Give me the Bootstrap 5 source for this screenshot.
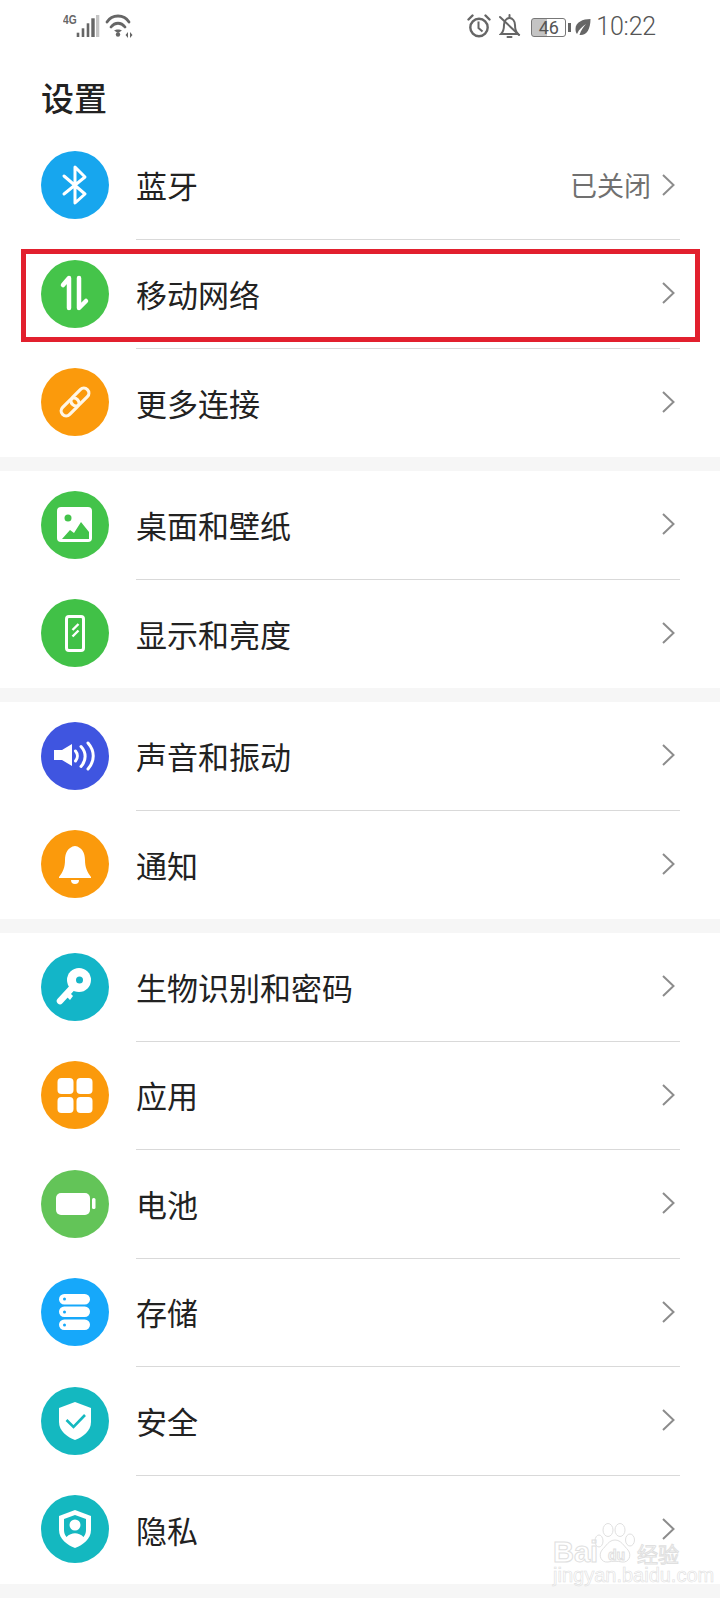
<!DOCTYPE html>
<html lang="zh">
<head>
  <meta charset="UTF-8" />
  <meta name="viewport" content="width=device-width, initial-scale=1.0"/>
  <title>设置</title>
  <link href="https://cdn.jsdelivr.net/npm/bootstrap@5.3.0/dist/css/bootstrap.min.css" rel="stylesheet">
  <style>
    body {
      font-family: "Noto Sans CJK SC", "Liberation Sans", sans-serif;
      background: #fff;
      color: #222;
      width: 720px;
      height: 1600px;
      overflow: hidden;
      position: relative;
    }
    .stat-bar {
      height: 69px;
      padding: 11px 64px 0 63px;
      color: #666;
    }
    .stat-left, .stat-right { height: 32px; }
    .net-label {
      font-family: "Liberation Sans", sans-serif;
      font-size: 12px;
      font-weight: 700;
      line-height: 12px;
      margin-top: 3px;
      transform: scaleX(.85);
      transform-origin: left top;
      width: 13px;
    }
    .batt-box {
      width: 35px;
      height: 19px;
      border: 1px solid #777;
      border-radius: 3px;
      background: linear-gradient(90deg, #c4c4c4 46%, #fff 46%);
      font-family: "Roboto", sans-serif;
      font-size: 18px;
      line-height: 17px;
      text-align: center;
      color: #555;
    }
    .batt-nub { width: 3px; height: 9px; background: #666; margin-left: 2px; }
    .clock {
      font-family: "Roboto", sans-serif;
      font-size: 25px;
      font-weight: 300;
      letter-spacing: -.2px;
      line-height: 32px;
      color: #555;
      margin-left: 5px;
    }
    .page-title {
      font-size: 33px;
      font-weight: 500;
      line-height: 57px;
      height: 62px;
      margin: 0 0 0 41px;
      color: #222;
    }
    .set-group { border-radius: 0; }
    .set-group + .set-group { border-top: 14px solid #f6f6f6; }
    .set-row {
      height: 108.5px;
      padding: 0 40px 0 41px;
      border: 0;
      background: transparent;
      position: relative;
    }
    .set-ico { width: 68px; height: 68px; flex: none; display: block; }
    .set-main {
      height: calc(100% + 1px);
      margin-left: 27px;
      padding-right: 5px;
      font-size: 31px;
      color: #222;
      line-height: 1;
    }
    .set-row:not(:last-child) .set-main { border-bottom: 1px solid #d9d9d9; }
    .set-val { font-size: 27px; color: #707070; margin-right: 11px; }
    .chev { width: 13px; height: 22px; flex: none; position: relative; z-index: 2; }
    .hi-box {
      position: absolute;
      left: 21px;
      right: 20px;
      top: 9.5px;
      bottom: 6px;
      border: 5px solid #e2202e;
      pointer-events: none;
    }
    .wmark {
      position: absolute;
      left: 553px;
      top: 1523px;
      width: 128px;
      height: 60px;
      color: transparent;
      -webkit-text-stroke: 1px #e0e0e0;
    }
    .wm-bai { position: absolute; left: 0; top: 14px; font: 700 29px/30px "Liberation Sans", sans-serif; }
    .wm-du { position: absolute; left: 55px; top: 25px; font: 700 14px/14px "Liberation Sans", sans-serif; }
    .wm-jy { position: absolute; left: 84px; top: 18px; font-size: 21px; line-height: 24px; white-space: nowrap; }
    .wm-url { position: absolute; left: 0; top: 43px; font: 400 20px/18px "Liberation Sans", sans-serif; white-space: nowrap; -webkit-text-stroke: .6px #e0e0e0; }
    .wm-paw { position: absolute; left: 41px; top: 0; width: 42px; height: 42px; }
  </style>
</head>
<body>
  <div class="stat-bar d-flex justify-content-between">
    <div class="stat-left d-flex align-items-start">
      <span class="net-label">4G</span>
      <svg width="24" height="30" viewBox="0 0 24 30" class="d-block">
        <g fill="#666"><rect x=".7" y="21.700" width="2.600" height="4.300"/><rect x="5.700" y="17.300" width="2.600" height="8.700"/><rect x="10.700" y="12.300" width="2.600" height="13.700"/><rect x="15.300" y="7.300" width="3.400" height="18.700"/></g>
        <rect x="20" y="4" width="3.300" height="22" fill="#c4c4c4"/>
      </svg>
      <svg width="30" height="30" viewBox="0 0 30 30" class="d-block ms-1">
        <g fill="none" stroke="#666" stroke-width="2.800" stroke-linecap="round">
          <path d="M3 11C8 3 20 3 25 11"/><path d="M7 16C11 11 17 11 21 16"/>
        </g>
        <path d="M10 19.500C12 18 16 18 18 19.500L14 22z" fill="#666"/>
        <circle cx="14" cy="23.500" r="2.200" fill="#666"/>
        <path d="M24 21v6l-2.500-3zM26 21v6l2.500-3z" fill="#666"/>
      </svg>
    </div>
    <div class="stat-right d-flex align-items-center">
      <svg width="24" height="30" viewBox="0 0 24 30" class="d-block">
        <circle cx="12" cy="15.500" r="8.700" fill="none" stroke="#666" stroke-width="2.400"/>
        <path d="M11.500 9.500v6.500l4 3.500" fill="none" stroke="#666" stroke-width="2"/>
        <path d="M1.500 7.500l4-4M22.500 7.500l-4-4" stroke="#666" stroke-width="2.400" stroke-linecap="round"/>
      </svg>
      <svg width="24" height="30" viewBox="0 0 24 30" class="d-block ms-2">
        <path d="M2 22c2.500-2.500 3-5 3-9 0-4 2.500-7 5.500-7s5.500 3 5.500 7c0 4 1 7 3 9z" fill="none" stroke="#666" stroke-width="2"/>
        <path d="M10.500 3v3M8.500 25h4M1 5l19 18" stroke="#666" stroke-width="2" stroke-linecap="round"/>
      </svg>
      <div class="batt-box ms-2">46</div>
      <div class="batt-nub"></div>
      <svg width="16" height="20" viewBox="0 0 16 20" class="d-block ms-1">
        <path d="M15.500 2C8 2 .5 5 .5 12c0 2 .5 4 1.500 5C4 12 8 9 11 7 8.500 10 6 13 4.500 18 11 19 15.500 13 15.500 2z" fill="#666"/>
      </svg>
      <span class="clock">10:22</span>
    </div>
  </div>

  <h1 class="page-title">设置</h1>

  <div class="list-group list-group-flush set-group">
    <div class="list-group-item set-row d-flex align-items-center">
      <svg class="set-ico" viewBox="0 0 68 68"><circle cx="34" cy="34" r="34" fill="#17a6ee"/><path d="M23 25L44 43 34 52V16L44 26 23 43" fill="none" stroke="#fff" stroke-width="3" stroke-linejoin="round" stroke-linecap="round"/></svg>
      <div class="set-main flex-grow-1 d-flex align-items-center">
        <span class="me-auto">蓝牙</span><span class="set-val">已关闭</span>
        <svg class="chev" viewBox="0 0 13 22"><path d="M1 1l10.500 10L1 21" fill="none" stroke="#8c8c8c" stroke-width="2"/></svg>
      </div>
    </div>
    <div class="list-group-item set-row d-flex align-items-center">
      <svg class="set-ico" viewBox="0 0 68 68"><circle cx="34" cy="34" r="34" fill="#45c44a"/><path d="M28 48V18L22 25M38 18V48L45 41" fill="none" stroke="#fff" stroke-width="4.500" stroke-linecap="round" stroke-linejoin="round"/></svg>
      <div class="set-main flex-grow-1 d-flex align-items-center">
        <span class="me-auto">移动网络</span>
        <svg class="chev" viewBox="0 0 13 22"><path d="M1 1l10.500 10L1 21" fill="none" stroke="#8c8c8c" stroke-width="2"/></svg>
      </div>
      <div class="hi-box"></div>
    </div>
    <div class="list-group-item set-row d-flex align-items-center">
      <svg class="set-ico" viewBox="0 0 68 68"><circle cx="34" cy="34" r="34" fill="#fb9a0c"/><g transform="rotate(-45 34 34)" fill="none" stroke="#fff6e6" stroke-width="3.200"><rect x="16.500" y="29" width="21" height="10" rx="5"/><rect x="30.500" y="29" width="21" height="10" rx="5"/></g></svg>
      <div class="set-main flex-grow-1 d-flex align-items-center">
        <span class="me-auto">更多连接</span>
        <svg class="chev" viewBox="0 0 13 22"><path d="M1 1l10.500 10L1 21" fill="none" stroke="#8c8c8c" stroke-width="2"/></svg>
      </div>
    </div>
  </div>

  <div class="list-group list-group-flush set-group">
    <div class="list-group-item set-row d-flex align-items-center">
      <svg class="set-ico" viewBox="0 0 68 68"><circle cx="34" cy="34" r="34" fill="#43c34a"/><rect x="16" y="16" width="35" height="35" rx="4" fill="#fff"/><circle cx="27" cy="27" r="3.500" fill="#43c34a"/><path d="M21 48l8-9 4 3 7-11 8 10v7z" fill="#43c34a"/></svg>
      <div class="set-main flex-grow-1 d-flex align-items-center">
        <span class="me-auto">桌面和壁纸</span>
        <svg class="chev" viewBox="0 0 13 22"><path d="M1 1l10.500 10L1 21" fill="none" stroke="#8c8c8c" stroke-width="2"/></svg>
      </div>
    </div>
    <div class="list-group-item set-row d-flex align-items-center">
      <svg class="set-ico" viewBox="0 0 68 68"><circle cx="34" cy="34" r="34" fill="#41c147"/><rect x="25.500" y="17.500" width="17" height="34" rx="2.500" fill="none" stroke="#fff" stroke-width="3"/><path d="M31.500 31l6-6M31.500 37.500l6-6" stroke="#fff" stroke-width="2.400"/></svg>
      <div class="set-main flex-grow-1 d-flex align-items-center">
        <span class="me-auto">显示和亮度</span>
        <svg class="chev" viewBox="0 0 13 22"><path d="M1 1l10.500 10L1 21" fill="none" stroke="#8c8c8c" stroke-width="2"/></svg>
      </div>
    </div>
  </div>

  <div class="list-group list-group-flush set-group">
    <div class="list-group-item set-row d-flex align-items-center">
      <svg class="set-ico" viewBox="0 0 68 68"><circle cx="34" cy="34" r="34" fill="#3f55e0"/><path d="M13 28h8l10-6v22l-10-6h-8z" fill="#fff"/><path d="M34.500 29c2.500 3 2.500 7 0 10M40 24.500c5.500 6 5.500 14 0 20M47 21c7 8 7 18 0 26" fill="none" stroke="#fff" stroke-width="3" stroke-linecap="round"/></svg>
      <div class="set-main flex-grow-1 d-flex align-items-center">
        <span class="me-auto">声音和振动</span>
        <svg class="chev" viewBox="0 0 13 22"><path d="M1 1l10.500 10L1 21" fill="none" stroke="#8c8c8c" stroke-width="2"/></svg>
      </div>
    </div>
    <div class="list-group-item set-row d-flex align-items-center">
      <svg class="set-ico" viewBox="0 0 68 68"><circle cx="34" cy="34" r="34" fill="#fb9a0c"/><path d="M34 16c7 1 10 7 10 14 0 7 2 12 6 17v1H18v-1c4-5 6-10 6-17 0-7 3-13 10-14z" fill="#fff"/><path d="M30 50h8a4 4 0 0 1-8 0z" fill="#fff"/></svg>
      <div class="set-main flex-grow-1 d-flex align-items-center">
        <span class="me-auto">通知</span>
        <svg class="chev" viewBox="0 0 13 22"><path d="M1 1l10.500 10L1 21" fill="none" stroke="#8c8c8c" stroke-width="2"/></svg>
      </div>
    </div>
  </div>

  <div class="list-group list-group-flush set-group">
    <div class="list-group-item set-row d-flex align-items-center">
      <svg class="set-ico" viewBox="0 0 68 68"><circle cx="34" cy="34" r="34" fill="#13b5c8"/><circle cx="38" cy="27" r="12" fill="#fff"/><circle cx="38.500" cy="27" r="3.500" fill="#13b5c8"/><path d="M31 35L19 48" stroke="#fff" stroke-width="6.500" stroke-linecap="round"/><path d="M24 42l5 5 3-4-4-4z" fill="#fff"/></svg>
      <div class="set-main flex-grow-1 d-flex align-items-center">
        <span class="me-auto">生物识别和密码</span>
        <svg class="chev" viewBox="0 0 13 22"><path d="M1 1l10.500 10L1 21" fill="none" stroke="#8c8c8c" stroke-width="2"/></svg>
      </div>
    </div>
    <div class="list-group-item set-row d-flex align-items-center">
      <svg class="set-ico" viewBox="0 0 68 68"><circle cx="34" cy="34" r="34" fill="#fb9a0c"/><g fill="#fff"><rect x="16.500" y="17" width="16" height="16" rx="4"/><rect x="35.500" y="17" width="16" height="16" rx="4"/><rect x="16.500" y="36" width="16" height="16" rx="4"/><rect x="35.500" y="36" width="16" height="16" rx="4"/></g></svg>
      <div class="set-main flex-grow-1 d-flex align-items-center">
        <span class="me-auto">应用</span>
        <svg class="chev" viewBox="0 0 13 22"><path d="M1 1l10.500 10L1 21" fill="none" stroke="#8c8c8c" stroke-width="2"/></svg>
      </div>
    </div>
    <div class="list-group-item set-row d-flex align-items-center">
      <svg class="set-ico" viewBox="0 0 68 68"><circle cx="34" cy="34" r="34" fill="#63c458"/><rect x="15" y="23" width="34" height="22" rx="5" fill="#fff"/><rect x="51" y="28" width="3.500" height="11" rx="1.500" fill="#fff"/></svg>
      <div class="set-main flex-grow-1 d-flex align-items-center">
        <span class="me-auto">电池</span>
        <svg class="chev" viewBox="0 0 13 22"><path d="M1 1l10.500 10L1 21" fill="none" stroke="#8c8c8c" stroke-width="2"/></svg>
      </div>
    </div>
    <div class="list-group-item set-row d-flex align-items-center">
      <svg class="set-ico" viewBox="0 0 68 68"><circle cx="34" cy="34" r="34" fill="#16a8fa"/><g fill="#fff"><rect x="18" y="16" width="31" height="10.500" rx="5.200"/><rect x="18" y="28.500" width="31" height="10.500" rx="5.200"/><rect x="18" y="41.500" width="31" height="10.500" rx="5.200"/></g><g fill="#16a8fa"><circle cx="23.500" cy="21" r="1.500"/><circle cx="23.500" cy="34" r="1.500"/><circle cx="23.500" cy="47" r="1.500"/></g></svg>
      <div class="set-main flex-grow-1 d-flex align-items-center">
        <span class="me-auto">存储</span>
        <svg class="chev" viewBox="0 0 13 22"><path d="M1 1l10.500 10L1 21" fill="none" stroke="#8c8c8c" stroke-width="2"/></svg>
      </div>
    </div>
    <div class="list-group-item set-row d-flex align-items-center">
      <svg class="set-ico" viewBox="0 0 68 68"><circle cx="34" cy="34" r="34" fill="#14b8c0"/><path d="M34 15l16 6v14c0 9-8 15-16 18-8-3-16-9-16-18V21z" fill="#fff"/><path d="M25.500 33l7 7 11.500-12" fill="none" stroke="#14b8c0" stroke-width="2.600"/></svg>
      <div class="set-main flex-grow-1 d-flex align-items-center">
        <span class="me-auto">安全</span>
        <svg class="chev" viewBox="0 0 13 22"><path d="M1 1l10.500 10L1 21" fill="none" stroke="#8c8c8c" stroke-width="2"/></svg>
      </div>
    </div>
    <div class="list-group-item set-row d-flex align-items-center">
      <svg class="set-ico" viewBox="0 0 68 68"><circle cx="34" cy="34" r="34" fill="#14b8c0"/><path d="M34 15l16 6v14c0 9-8 15-16 18-8-3-16-9-16-18V21z" fill="#fff"/><path d="M34 20l11 4v11c0 3-1 5-2.500 7-5-5-12-5-17 0-1.500-2-2.500-4-2.500-7V24z" fill="#14b8c0"/><circle cx="34" cy="30" r="5.500" fill="#fff"/></svg>
      <div class="set-main flex-grow-1 d-flex align-items-center">
        <span class="me-auto">隐私</span>
        <svg class="chev" viewBox="0 0 13 22"><path d="M1 1l10.500 10L1 21" fill="none" stroke="#8c8c8c" stroke-width="2"/></svg>
      </div>
    </div>
  </div>
  <div class="set-group"></div>

  <div class="wmark">
    <svg class="wm-paw" viewBox="0 0 42 42">
      <g fill="#fff" stroke="#e0e0e0" stroke-width="1">
        <ellipse cx="5" cy="18" rx="4" ry="6"/><ellipse cx="14" cy="7" rx="5" ry="6.500"/><ellipse cx="26" cy="7" rx="5" ry="6.500"/><ellipse cx="36" cy="17" rx="4.500" ry="6"/>
        <path d="M21 17c6 0 9 6 13 10 4 5 1 13-6 12-4-1-10-1-14 0-7 1-10-7-6-12 4-4 7-10 13-10z"/>
      </g>
    </svg>
    <span class="wm-bai">Bai</span>
    <span class="wm-du">du</span>
    <span class="wm-jy">经验</span>
    <span class="wm-url">jingyan.baidu.com</span>
  </div>
</body>
</html>
